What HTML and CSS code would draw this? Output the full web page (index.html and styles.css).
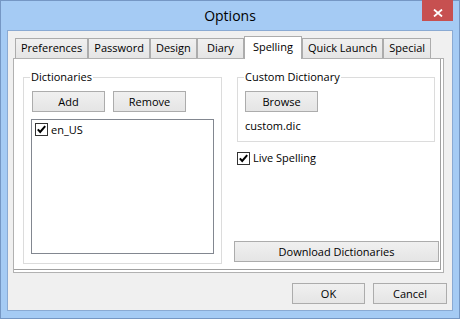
FILE: index.html
```html
<!DOCTYPE html>
<html lang="en">
<head>
  <meta charset="UTF-8">
  <meta name="viewport" content="width=device-width, initial-scale=1.0">
  <title>Options</title>
  <link rel="stylesheet" href="styles.css">
</head>
<body>
  <div class="window">
    <div class="titlebar">
      <span></span>
      <div class="title">Options</div>
      <button class="close" aria-label="Close">
        <svg width="10" height="8" viewBox="0 0 10 8"><path d="M1 0.5 L9 7.5 M9 0.5 L1 7.5" stroke="#fff" stroke-width="1.8" fill="none"/></svg>
      </button>
    </div>
    <div class="client">
      <div class="tab-strip">
        <div class="tab">Preferences</div>
        <div class="tab">Password</div>
        <div class="tab">Design</div>
        <div class="tab">Diary</div>
        <div class="tab active">Spelling</div>
        <div class="tab">Quick Launch</div>
        <div class="tab">Special</div>
      </div>
      <div class="tab-page">
        <fieldset class="group dict-group">
          <legend>Dictionaries</legend>
          <div class="button-row">
            <button class="btn">Add</button>
            <button class="btn">Remove</button>
          </div>
          <div class="listbox">
            <label class="check">
              <svg class="box" width="13" height="13" viewBox="0 0 13 13"><rect x="0.5" y="0.5" width="12" height="12" fill="#fff" stroke="#333"/><path d="M2.8 6.4 L5.2 9 L10.2 3.2" stroke="#000" stroke-width="2" fill="none"/></svg>
              <span>en_US</span>
            </label>
          </div>
        </fieldset>
        <div class="side">
          <fieldset class="group custom-group">
            <legend>Custom Dictionary</legend>
            <div><button class="btn">Browse</button></div>
            <div class="file-name">custom.dic</div>
          </fieldset>
          <label class="check live">
            <svg class="box" width="13" height="13" viewBox="0 0 13 13"><rect x="0.5" y="0.5" width="12" height="12" fill="#fff" stroke="#333"/><path d="M2.8 6.4 L5.2 9 L10.2 3.2" stroke="#000" stroke-width="2" fill="none"/></svg>
            <span>Live Spelling</span>
          </label>
          <button class="btn wide">Download Dictionaries</button>
        </div>
      </div>
      <div class="actions">
        <button class="btn ok">OK</button>
        <button class="btn cancel">Cancel</button>
      </div>
    </div>
  </div>
</body>
</html>
```
FILE: styles.css
```css
body {
  margin: 0;
  font-family: 'Open Sans', 'Noto Sans', sans-serif;
  font-size: 11px;
  color: #000;
}
.window {
  width: 460px;
  height: 319px;
  box-sizing: border-box;
  border: 1px solid #7597c4;
  background: #a5cbf4;
  padding: 0 6px 7px;
  display: flex;
  flex-direction: column;
}
.titlebar {
  height: 29px;
  flex: none;
  display: grid;
  grid-template-columns: 31px 1fr 31px;
  align-items: start;
}
.title {
  text-align: center;
  font-size: 14px;
  line-height: 29px;
  color: #000;
}
.close {
  width: 31px;
  height: 21px;
  margin-top: -1px;
  border: none;
  padding: 4px 0 0;
  background: #c75050;
  display: flex;
  justify-content: center;
  align-items: center;
}
.client {
  flex: 1;
  min-height: 0;
  border: 1px solid #8aaad3;
  background: #f0f0f0;
  padding: 5px 8px 6px 5px;
  display: flex;
  flex-direction: column;
}
.tab-strip {
  height: 23px;
  flex: none;
  display: flex;
  align-items: flex-end;
  padding-left: 2px;
  margin-bottom: -1px;
  position: relative;
  z-index: 1;
}
.tab {
  height: 20px;
  min-width: 47px;
  box-sizing: border-box;
  margin-bottom: 1px;
  padding: 0 5px;
  border: 1px solid #acacac;
  border-bottom: none;
  line-height: 18px;
  text-align: center;
  background: linear-gradient(#f0f0f0, #e5e5e5);
  white-space: nowrap;
}
.tab.active {
  height: 23px;
  margin-bottom: 0;
  padding: 0 8px;
  line-height: 19px;
  background: #fff;
}
.tab-page {
  flex: 1;
  min-height: 0;
  border: 1px solid #b1b1b1;
  background: #fff;
  box-shadow: inset -2px -2px 0 #fff, inset -3px -3px 0 #a0a0a0;
  padding: 10px 4px 8px 9px;
  display: flex;
  gap: 12px;
}
.group {
  margin: 0;
  min-width: 0;
  border: 1px solid #dcdcdc;
  padding: 6px 7px 9px;
}
.group legend {
  padding: 0 1px;
  margin-left: -1px;
  line-height: 16px;
}
.dict-group {
  width: 199px;
  box-sizing: border-box;
  display: flex;
  flex-direction: column;
}
.button-row {
  display: flex;
  gap: 8px;
  padding-left: 1px;
}
.btn {
  font: inherit;
  color: #000;
  width: 73px;
  height: 21px;
  box-sizing: border-box;
  padding: 0;
  border: 1px solid #acacac;
  background: linear-gradient(#f0f0f0, #e5e5e5);
  line-height: 18px;
}
.listbox {
  flex: 1;
  margin-top: 7px;
  border: 1px solid #828790;
  padding: 2px 3px;
}
.check {
  display: flex;
  align-items: center;
  gap: 3px;
  line-height: 15px;
}
.check .box {
  flex: none;
}
.side {
  flex: 1;
  display: flex;
  flex-direction: column;
  padding-bottom: 2px;
}
.custom-group {
  margin: 0 4px 0 3px;
  padding-bottom: 7px;
}
.file-name {
  margin-top: 6px;
  line-height: 16px;
}
.live {
  margin: 8px 0 0 3px;
  line-height: 16px;
}
.btn.wide {
  width: 100%;
  margin-top: auto;
}
.actions {
  flex: none;
  display: flex;
  justify-content: flex-end;
  gap: 8px;
  margin: 10px -3px 0 0;
}
.btn.cancel {
  width: 74px;
}
```
